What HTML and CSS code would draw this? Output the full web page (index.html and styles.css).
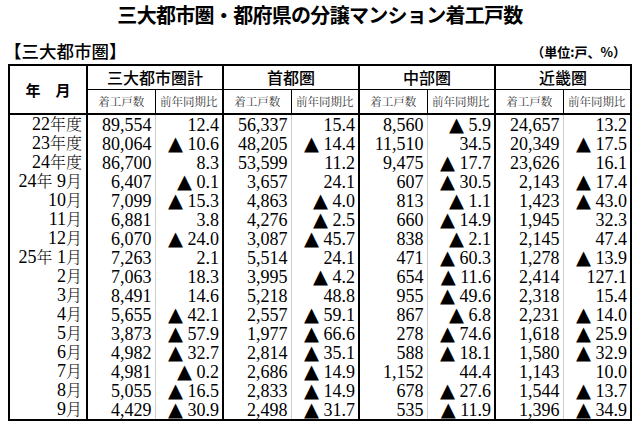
FILE: index.html
```html
<!DOCTYPE html>
<html lang="ja">
<head>
<meta charset="utf-8">
<title>三大都市圏・都府県の分譲マンション着工戸数</title>
<link rel="stylesheet" href="styles.css">
</head>
<body>
<h1 class="title">三大都市圏・都府県の分譲マンション着工戸数</h1>
<div class="subrow">
  <span class="section">【三大都市圏】</span>
  <span class="unit">（単位:戸、%）</span>
</div>
<table class="data">
  <colgroup>
    <col class="c-year">
    <col class="c"><col class="c"><col class="c"><col class="c">
    <col class="c"><col class="c"><col class="c"><col class="c">
  </colgroup>
  <thead>
    <tr class="h1">
      <th rowspan="2" class="yh">年　月</th>
      <th colspan="2" class="gh">三大都市圏計</th>
      <th colspan="2" class="gh">首都圏</th>
      <th colspan="2" class="gh">中部圏</th>
      <th colspan="2" class="gh">近畿圏</th>
    </tr>
    <tr class="h2">
      <th class="sh a">着工戸数</th><th class="sh b">前年同期比</th>
      <th class="sh a">着工戸数</th><th class="sh b">前年同期比</th>
      <th class="sh a">着工戸数</th><th class="sh b">前年同期比</th>
      <th class="sh a">着工戸数</th><th class="sh b">前年同期比</th>
    </tr>
  </thead>
  <tbody>
    <tr><td class="y">22<span class="k">年度</span></td><td class="a">89,554</td><td class="b">12.4</td><td class="a">56,337</td><td class="b">15.4</td><td class="a">8,560</td><td class="b"><span class="neg">▲</span> 5.9</td><td class="a">24,657</td><td class="b">13.2</td></tr>
    <tr><td class="y">23<span class="k">年度</span></td><td class="a">80,064</td><td class="b"><span class="neg">▲</span> 10.6</td><td class="a">48,205</td><td class="b"><span class="neg">▲</span> 14.4</td><td class="a">11,510</td><td class="b">34.5</td><td class="a">20,349</td><td class="b"><span class="neg">▲</span> 17.5</td></tr>
    <tr><td class="y">24<span class="k">年度</span></td><td class="a">86,700</td><td class="b">8.3</td><td class="a">53,599</td><td class="b">11.2</td><td class="a">9,475</td><td class="b"><span class="neg">▲</span> 17.7</td><td class="a">23,626</td><td class="b">16.1</td></tr>
    <tr><td class="y">24<span class="k">年</span> 9<span class="k">月</span></td><td class="a">6,407</td><td class="b"><span class="neg">▲</span> 0.1</td><td class="a">3,657</td><td class="b">24.1</td><td class="a">607</td><td class="b"><span class="neg">▲</span> 30.5</td><td class="a">2,143</td><td class="b"><span class="neg">▲</span> 17.4</td></tr>
    <tr><td class="y">10<span class="k">月</span></td><td class="a">7,099</td><td class="b"><span class="neg">▲</span> 15.3</td><td class="a">4,863</td><td class="b"><span class="neg">▲</span> 4.0</td><td class="a">813</td><td class="b"><span class="neg">▲</span> 1.1</td><td class="a">1,423</td><td class="b"><span class="neg">▲</span> 43.0</td></tr>
    <tr><td class="y">11<span class="k">月</span></td><td class="a">6,881</td><td class="b">3.8</td><td class="a">4,276</td><td class="b"><span class="neg">▲</span> 2.5</td><td class="a">660</td><td class="b"><span class="neg">▲</span> 14.9</td><td class="a">1,945</td><td class="b">32.3</td></tr>
    <tr><td class="y">12<span class="k">月</span></td><td class="a">6,070</td><td class="b"><span class="neg">▲</span> 24.0</td><td class="a">3,087</td><td class="b"><span class="neg">▲</span> 45.7</td><td class="a">838</td><td class="b"><span class="neg">▲</span> 2.1</td><td class="a">2,145</td><td class="b">47.4</td></tr>
    <tr><td class="y">25<span class="k">年</span> 1<span class="k">月</span></td><td class="a">7,263</td><td class="b">2.1</td><td class="a">5,514</td><td class="b">24.1</td><td class="a">471</td><td class="b"><span class="neg">▲</span> 60.3</td><td class="a">1,278</td><td class="b"><span class="neg">▲</span> 13.9</td></tr>
    <tr><td class="y">2<span class="k">月</span></td><td class="a">7,063</td><td class="b">18.3</td><td class="a">3,995</td><td class="b"><span class="neg">▲</span> 4.2</td><td class="a">654</td><td class="b"><span class="neg">▲</span> 11.6</td><td class="a">2,414</td><td class="b">127.1</td></tr>
    <tr><td class="y">3<span class="k">月</span></td><td class="a">8,491</td><td class="b">14.6</td><td class="a">5,218</td><td class="b">48.8</td><td class="a">955</td><td class="b"><span class="neg">▲</span> 49.6</td><td class="a">2,318</td><td class="b">15.4</td></tr>
    <tr><td class="y">4<span class="k">月</span></td><td class="a">5,655</td><td class="b"><span class="neg">▲</span> 42.1</td><td class="a">2,557</td><td class="b"><span class="neg">▲</span> 59.1</td><td class="a">867</td><td class="b"><span class="neg">▲</span> 6.8</td><td class="a">2,231</td><td class="b"><span class="neg">▲</span> 14.0</td></tr>
    <tr><td class="y">5<span class="k">月</span></td><td class="a">3,873</td><td class="b"><span class="neg">▲</span> 57.9</td><td class="a">1,977</td><td class="b"><span class="neg">▲</span> 66.6</td><td class="a">278</td><td class="b"><span class="neg">▲</span> 74.6</td><td class="a">1,618</td><td class="b"><span class="neg">▲</span> 25.9</td></tr>
    <tr><td class="y">6<span class="k">月</span></td><td class="a">4,982</td><td class="b"><span class="neg">▲</span> 32.7</td><td class="a">2,814</td><td class="b"><span class="neg">▲</span> 35.1</td><td class="a">588</td><td class="b"><span class="neg">▲</span> 18.1</td><td class="a">1,580</td><td class="b"><span class="neg">▲</span> 32.9</td></tr>
    <tr><td class="y">7<span class="k">月</span></td><td class="a">4,981</td><td class="b"><span class="neg">▲</span> 0.2</td><td class="a">2,686</td><td class="b"><span class="neg">▲</span> 14.9</td><td class="a">1,152</td><td class="b">44.4</td><td class="a">1,143</td><td class="b">10.0</td></tr>
    <tr><td class="y">8<span class="k">月</span></td><td class="a">5,055</td><td class="b"><span class="neg">▲</span> 16.5</td><td class="a">2,833</td><td class="b"><span class="neg">▲</span> 14.9</td><td class="a">678</td><td class="b"><span class="neg">▲</span> 27.6</td><td class="a">1,544</td><td class="b"><span class="neg">▲</span> 13.7</td></tr>
    <tr><td class="y">9<span class="k">月</span></td><td class="a">4,429</td><td class="b"><span class="neg">▲</span> 30.9</td><td class="a">2,498</td><td class="b"><span class="neg">▲</span> 31.7</td><td class="a">535</td><td class="b"><span class="neg">▲</span> 11.9</td><td class="a">1,396</td><td class="b"><span class="neg">▲</span> 34.9</td></tr>
  </tbody>
</table>
</body>
</html>
```

FILE: styles.css
```css
html, body {
  margin: 0;
  padding: 0;
  background: #fff;
  color: #000;
}

body {
  width: 640px;
  height: 421px;
  overflow: hidden;
  font-family: "Noto Sans CJK JP", sans-serif;
}

.title {
  margin: 0;
  height: 30px;
  line-height: 30px;
  text-align: center;
  font-size: 20px;
  font-weight: 700;
  letter-spacing: -0.7px;
}

.subrow {
  display: flex;
  justify-content: space-between;
  align-items: flex-end;
  height: 34px;
  padding: 0 14px 0 4px;
  box-sizing: border-box;
}

.section {
  font-size: 17.5px;
  font-weight: 500;
  line-height: 22px;
  padding-bottom: 2px;
}

.unit {
  font-size: 13px;
  font-weight: 700;
  line-height: 16px;
  padding-bottom: 4px;
}

.data {
  margin-left: 8px;
  border-collapse: collapse;
  table-layout: fixed;
  width: 622px;
  border: 2px solid #000;
}

.c-year { width: 78px; }
.c { width: 68px; }

.data th {
  padding: 0;
  font-weight: 400;
}

.h1 { height: 24px; }
.h2 { height: 25px; }

.yh {
  font-size: 15px;
  font-weight: 700 !important;
  border-right: 2px solid #000;
  border-bottom: 2px solid #000;
}

.gh {
  font-size: 16px;
  font-weight: 500 !important;
  line-height: 22px;
  border-left: 2px solid #000;
  border-right: 2px solid #000;
  border-bottom: 1px solid #000;
}

.sh {
  font-family: "Noto Serif CJK JP", "Noto Sans CJK JP", serif;
  font-size: 11.5px;
  color: #333;
  border-bottom: 2px solid #000;
}

.sh.a { border-left: 2px solid #000; border-right: 1px solid #000; }
.sh.b { border-right: 2px solid #000; }

.data td {
  padding: 0 3px 0 0;
  height: 18.75px;
  line-height: 18px;
  text-align: right;
  font-family: "Liberation Serif", "Noto Serif CJK JP", "Noto Sans CJK JP", serif;
  font-size: 18px;
  white-space: nowrap;
}

.data td.y {
  padding-right: 4px;
  border-right: 2px solid #000;
}

.k {
  font-size: 16px;
  font-weight: 300;
}

.data td.a {
  border-left: 2px solid #000;
  border-right: 1px solid #ccc;
}

.data td.b {
  border-right: 2px solid #000;
}

.neg {
  font-family: "DejaVu Sans", sans-serif;
  font-size: 19.5px;
  line-height: 16px;
}
```
